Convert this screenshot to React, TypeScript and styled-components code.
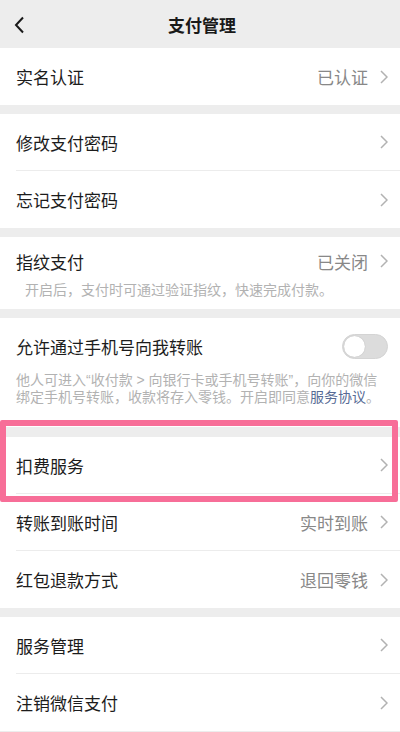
import styled, { createGlobalStyle } from "styled-components";

const GlobalStyle = createGlobalStyle`
  html, body {
    margin: 0;
    padding: 0;
    background: #ededed;
  }
  body {
    font-family: "Liberation Sans", "Noto Sans CJK SC", sans-serif;
    -webkit-font-smoothing: antialiased;
  }
`;

const Page = styled.div`
  width: 400px;
  height: 732px;
  overflow: hidden;
  background: #ededed;
  display: flex;
  flex-direction: column;
`;

const Header = styled.div`
  height: 48px;
  flex-shrink: 0;
  position: relative;
  display: flex;
  align-items: center;
  justify-content: center;
  background: #ededed;
`;

const BackButton = styled.div`
  position: absolute;
  left: 13px;
  top: 16px;
  width: 14px;
  height: 18px;
  display: flex;
`;

const Title = styled.div`
  font-size: 17px;
  font-weight: 600;
  color: #191919;
  margin-left: 4px;
`;

const Gap = styled.div<{ $h?: number }>`
  height: ${(p) => p.$h ?? 9}px;
  flex-shrink: 0;
  background: #ededed;
`;

const Group = styled.div`
  background: #fff;
  flex-shrink: 0;
`;

const Row = styled.div<{ $divider?: boolean }>`
  height: 57px;
  box-sizing: border-box;
  margin-left: 16px;
  padding-right: 12px;
  display: flex;
  align-items: center;
  justify-content: space-between;
  border-bottom: ${(p) => (p.$divider ? "1px solid #ececec" : "none")};
`;

const Label = styled.div`
  font-size: 17px;
  color: #1c1c1c;
`;

const Right = styled.div`
  display: flex;
  align-items: center;
  gap: 12px;
`;

const Value = styled.div`
  font-size: 17px;
  color: #888;
`;

const Block = styled.div<{ $pt: number; $pb: number }>`
  padding: ${(p) => p.$pt}px 12px ${(p) => p.$pb}px 16px;
`;

const BlockHead = styled.div`
  height: 24px;
  display: flex;
  align-items: center;
  justify-content: space-between;
`;

const Note = styled.p<{ $indent?: number; $mt: number }>`
  margin: ${(p) => p.$mt}px 0 0;
  padding-left: ${(p) => p.$indent ?? 0}px;
  padding-right: 2px;
  font-size: 14px;
  line-height: 17px;
  color: #b2b2b2;
`;

const Link = styled.span`
  color: #576b95;
`;

const Toggle = styled.div`
  width: 46px;
  height: 25px;
  box-sizing: border-box;
  border-radius: 13px;
  background: #dcdcdc;
  border: 1px solid #d4d4d4;
  padding: 1px;
  display: flex;
  align-items: center;
`;

const Knob = styled.div`
  width: 21px;
  height: 21px;
  border-radius: 50%;
  background: #fff;
  box-shadow: 0 0 1px rgba(0, 0, 0, 0.25);
`;

const Highlighted = styled.div`
  position: relative;
  flex-shrink: 0;
`;

const Highlight = styled.div`
  position: absolute;
  top: -7px;
  bottom: -8px;
  left: 0;
  right: 2px;
  border: 6px solid #f76e98;
  border-radius: 2px;
  pointer-events: none;
`;

const Chevron = () => (
  <svg width="8" height="14" viewBox="0 0 8 14">
    <path d="M1 1l6 6-6 6" fill="none" stroke="#b2b2b2" strokeWidth="1.5" />
  </svg>
);

type ItemProps = { label: string; value?: string; divider?: boolean };

const Item = ({ label, value, divider }: ItemProps) => (
  <Row $divider={divider}>
    <Label>{label}</Label>
    <Right>
      {value && <Value>{value}</Value>}
      <Chevron />
    </Right>
  </Row>
);

export default function App() {
  return (
    <>
      <GlobalStyle />
      <Page>
        <Header>
          <BackButton>
            <svg width="12" height="18" viewBox="0 0 12 18">
              <path d="M10 1.5L3 9l7 7.5" fill="none" stroke="#1a1a1a" strokeWidth="2" />
            </svg>
          </BackButton>
          <Title>支付管理</Title>
        </Header>

        <Group>
          <Item label="实名认证" value="已认证" />
        </Group>
        <Gap />
        <Group>
          <Item label="修改支付密码" divider />
          <Item label="忘记支付密码" />
        </Group>
        <Gap />
        <Group>
          <Block $pt={12} $pb={10}>
            <BlockHead>
              <Label>指纹支付</Label>
              <Right>
                <Value>已关闭</Value>
                <Chevron />
              </Right>
            </BlockHead>
            <Note $mt={9} $indent={9}>
              开启后，支付时可通过验证指纹，快速完成付款。
            </Note>
          </Block>
        </Group>
        <Gap />
        <Group>
          <Block $pt={16} $pb={21}>
            <BlockHead>
              <Label>允许通过手机号向我转账</Label>
              <Toggle>
                <Knob />
              </Toggle>
            </BlockHead>
            <Note $mt={14}>
              他人可进入“收付款 &gt; 向银行卡或手机号转账”，向你的微信绑定手机号转账，收款将存入零钱。开启即同意
              <Link>服务协议</Link>。
            </Note>
          </Block>
        </Group>
        <Highlighted>
          <Gap $h={10} />
          <Group>
            <Item label="扣费服务" divider />
          </Group>
          <Highlight />
        </Highlighted>
        <Group>
          <Item label="转账到账时间" value="实时到账" divider />
          <Item label="红包退款方式" value="退回零钱" />
        </Group>
        <Gap />
        <Group>
          <Item label="服务管理" divider />
          <Item label="注销微信支付" />
        </Group>
      </Page>
    </>
  );
}
